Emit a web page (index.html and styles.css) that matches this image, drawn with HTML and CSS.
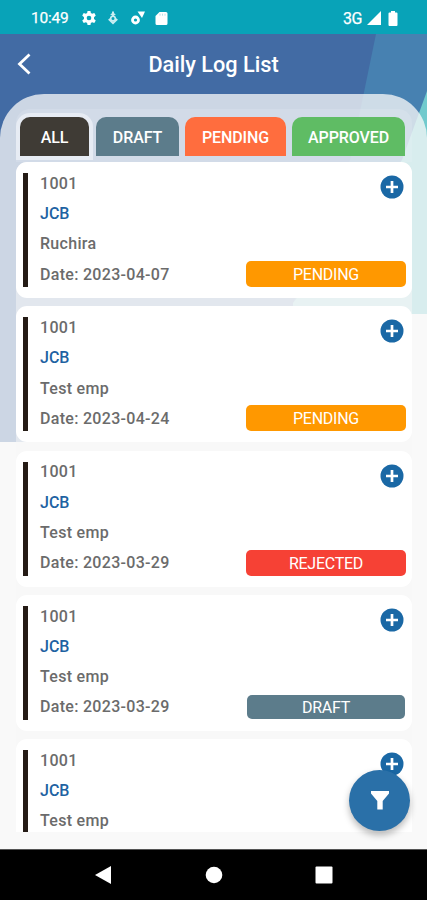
FILE: index.html
```html
<!DOCTYPE html>
<html lang="en">
<head>
<meta charset="utf-8">
<title>Daily Log List</title>
<link rel="stylesheet" href="styles.css">
</head>
<body>
<svg width="0" height="0" class="defs"><defs>
<symbol id="plus" viewBox="0 0 24 24"><circle cx="12" cy="12" r="11.500" fill="#1a68a5"/><path d="M12 6v12M6 12h12" stroke="#fff" stroke-width="2.700"/></symbol>
</defs></svg>
<div class="phone">
  <svg class="backdrop" viewBox="0 0 427 850">
    <path d="M0 34H427V314H293V442H0Z" fill="#426ba4"/>
    <path d="M376 34H427V314H293V303L350 160Z" fill="#4781b1"/>
    <path d="M427 91L402 160L293 303V314H427Z" fill="#71cacd"/>
  </svg>
  <header class="status">
    <span class="time">10:49</span>
    <svg class="s-gear" viewBox="0 0 24 24"><path fill="#fff" fill-rule="evenodd" d="M9.500 0h5l.7 3.600 2.200 1.300 3.700-1.300 2.500 4.300-3 2.600v3l3 2.600-2.500 4.300-3.700-1.300-2.200 1.300-.7 3.600h-5l-.7-3.600-2.200-1.300-3.700 1.300L.4 16.100l3-2.600v-3l-3-2.600 2.500-4.300 3.700 1.300 2.200-1.300ZM12 8a4 4 0 1 0 0 8 4 4 0 0 0 0-8Z"/></svg>
    <svg class="s-mic" viewBox="0 0 12 16"><path d="M6 1.500v5" stroke="#c9edf1" stroke-width="2"/><path d="M3.800 5L6 3l2.200 2" stroke="#c9edf1" stroke-width="1.200" fill="none"/><path d="M1.800 9L6 13l4.200-4" stroke="#c9edf1" stroke-width="2" fill="none"/><circle cx="6" cy="8.500" r="2.300" fill="none" stroke="#c9edf1" stroke-width="1.600"/></svg>
    <svg class="s-link" viewBox="0 0 16 16"><circle cx="5.500" cy="10" r="3" fill="none" stroke="#fff" stroke-width="2.800"/><path d="M7.500 1.500H15L12 8Z" fill="#fff"/></svg>
    <svg class="s-card" viewBox="0 0 13 15"><path d="M4.500 1H11a1.500 1.500 0 0 1 1.500 1.500v10A1.500 1.500 0 0 1 11 14H2A1.500 1.500 0 0 1 .5 12.500V5Z" fill="#fff"/><path d="M5 2.700v2M7.500 2.700v2M10 2.700v2" stroke="#a7dbe2" stroke-width=".8"/></svg>
    <span class="network">3G</span>
    <svg class="s-signal" viewBox="0 0 14 14"><path d="M14 0V14H0Z" fill="#fff"/></svg>
    <svg class="s-battery" viewBox="0 0 10 15"><path d="M3 0H7V1.500H8.500Q9.500 1.500 9.500 2.500V14Q9.500 15 8.500 15H1.500Q.5 15 .5 14V2.500Q.5 1.500 1.500 1.500H3Z" fill="#fff"/></svg>
  </header>
  <div class="titlebar">
    <svg class="back" viewBox="0 0 14 22"><path d="M12.500 1.500L2.500 11L12.500 20.500" fill="none" stroke="#fff" stroke-width="2.800"/></svg>
    <h1>Daily Log List</h1>
  </div>
  <main class="sheet">
    <div class="panel">
      <nav class="tabs">
        <div class="tab all">ALL</div><div class="tab draft">DRAFT</div><div class="tab pending">PENDING</div><div class="tab approved">APPROVED</div>
      </nav>
      <section class="list">
        <article class="card"><div class="info"><p>1001</p><p class="name">JCB</p><p>Ruchira</p><p>Date: 2023-04-07</p></div><svg class="add"><use href="#plus"/></svg><div class="badge b-pending">PENDING</div></article>
        <article class="card"><div class="info"><p>1001</p><p class="name">JCB</p><p>Test emp</p><p>Date: 2023-04-24</p></div><svg class="add"><use href="#plus"/></svg><div class="badge b-pending">PENDING</div></article>
        <article class="card"><div class="info"><p>1001</p><p class="name">JCB</p><p>Test emp</p><p>Date: 2023-03-29</p></div><svg class="add"><use href="#plus"/></svg><div class="badge b-rejected">REJECTED</div></article>
        <article class="card"><div class="info"><p>1001</p><p class="name">JCB</p><p>Test emp</p><p>Date: 2023-03-29</p></div><svg class="add"><use href="#plus"/></svg><div class="badge b-draft">DRAFT</div></article>
        <article class="card last"><div class="info"><p>1001</p><p class="name">JCB</p><p>Test emp</p></div><svg class="add"><use href="#plus"/></svg></article>
      </section>
    </div>
  </main>
  <div class="fab"><svg viewBox="0 0 18 20"><path d="M0 0H18V2.500L11.700 10V18.500H6.300V10L0 2.500Z" fill="#fff"/></svg></div>
  <footer class="navbar">
    <svg viewBox="0 0 18 18"><path d="M1 9L17 0V18Z" fill="#fff"/></svg>
    <svg viewBox="0 0 18 18"><circle cx="9" cy="9" r="8.300" fill="#fff"/></svg>
    <svg viewBox="0 0 18 18"><rect x=".5" y=".5" width="17" height="17" rx="1" fill="#fff"/></svg>
  </footer>
</div>
</body>
</html>
```
FILE: styles.css
```css
* { box-sizing: border-box; }
body { margin: 0; font-family: Roboto, sans-serif; }
svg { display: block; flex: none; }
p, h1 { margin: 0; }
.defs { position: absolute; }
.phone { position: relative; width: 427px; height: 900px; overflow: hidden; background: #f8f8f8; display: flex; flex-direction: column; isolation: isolate; }
.backdrop { position: absolute; top: 0; left: 0; width: 427px; height: 850px; z-index: -1; }
.status { height: 34px; flex: none; background: #08a3b8; color: #fff; display: flex; align-items: center; padding: 2px 29px 0 31px; font-size: 16px; }
.time { width: 51px; font-size: 15.5px; letter-spacing: -.2px; -webkit-text-stroke: .25px #fff; }
.s-gear { width: 14px; height: 14px; margin-right: 11px; }
.s-mic { width: 12px; height: 16px; margin-right: 11px; }
.s-link { width: 16px; height: 16px; margin-right: 9px; }
.s-card { width: 13px; height: 15px; }
.network { margin-left: auto; margin-right: 5px; letter-spacing: -.5px; -webkit-text-stroke: .25px #fff; }
.s-signal { width: 14px; height: 14px; margin-right: 7px; }
.s-battery { width: 10px; height: 15px; }
.titlebar { height: 60px; flex: none; display: grid; grid-template-columns: 50px 1fr 50px; align-items: center; }
.titlebar h1 { color: #fff; font-size: 21.7px; line-height: 26px; font-weight: 500; text-align: center; padding-top: 1px; }
.back { width: 14px; height: 22px; margin-left: 17px; }
.sheet { height: 755px; flex: none; border-radius: 44px 44px 0 0; background: rgba(248, 248, 248, .76); padding: 15px 16px 0; }
.panel { width: 396px; height: 723px; }
.tabs { display: flex; height: 53px; padding: 8px 0 6px 4px; border-radius: 14px 14px 0 0; background: rgba(248, 248, 255, .15); }
.tab { height: 39px; border-radius: 10px 10px 0 0; color: #fff; font-size: 16px; font-weight: 500; display: flex; align-items: center; justify-content: center; padding-top: 1px; letter-spacing: -.1px; }
.all { width: 69px; background: #3f3b35; margin-right: 7px; box-shadow: 0 0 0 4px rgba(240, 243, 250, .7); }
.draft { width: 83px; background: #5c7c8b; margin-right: 6px; }
.pending { width: 101px; background: #ff6d3e; margin-right: 6px; }
.approved { width: 113px; background: #5fbc64; }
.list { display: flex; flex-direction: column; gap: 8.3px; border-radius: 11px; background: rgba(248, 248, 248, .5); }
.card { height: 136px; flex: none; background: #fff; border-radius: 11px; padding: 11px 6px 11px 7px; display: grid; grid-template-columns: 1fr 160px; grid-template-rows: 1fr 26px; }
.info { grid-row: 1 / 3; border-left: 5px solid #251b15; padding-left: 12px; height: 114px; color: #6b6b6b; font-size: 16px; line-height: 30.3px; font-weight: 500; letter-spacing: .3px; }
.info p { height: 30.3px; }
.info p:first-child { margin-top: -4.300px; }
.info .name { color: #1e62a2; letter-spacing: 0; }
.add { width: 24px; height: 24px; justify-self: end; margin-right: 2px; margin-top: 2px; }
.badge { height: 26px; border-radius: 5px; color: #fff; font-size: 16px; line-height: 27px; text-align: center; letter-spacing: -.25px; }
.b-pending { background: #ff9800; }
.b-rejected { background: #f64135; }
.b-draft { background: #5c7c8b; margin: 1px; height: 24px; line-height: 25px; }
.last { height: 93px; padding-bottom: 0; border-radius: 11px 11px 0 0; }
.last .info { height: 82px; }
.fab { position: absolute; left: 349px; top: 770px; width: 61px; height: 61px; border-radius: 50%; background: #2a70a8; box-shadow: 0 4px 7px rgba(0, 0, 0, .28); display: flex; align-items: center; justify-content: center; }
.fab svg { width: 18px; height: 20px; }
.navbar { height: 51px; flex: none; background: #000; border-top: 1px solid #555; display: flex; justify-content: space-between; padding: 16px 94px 0; }
.navbar svg { width: 18px; height: 18px; }
```
